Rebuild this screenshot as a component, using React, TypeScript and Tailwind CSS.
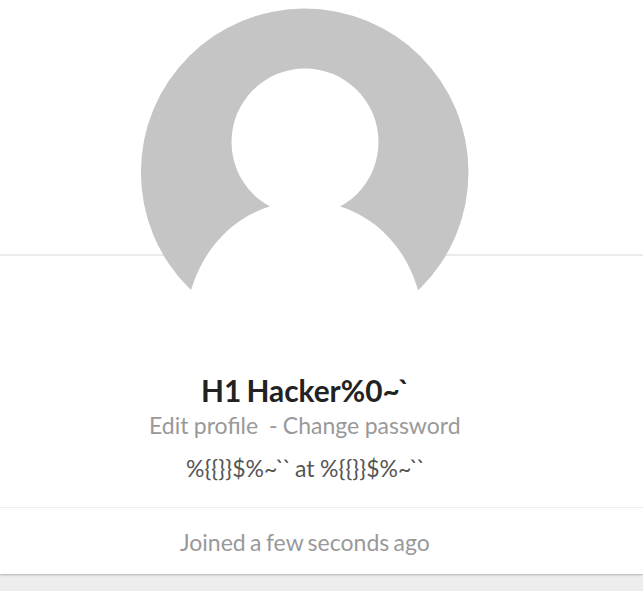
export default function App() {
  return (
    <div className="h-[591px] w-[643px] overflow-hidden bg-[#ededed] font-['Lato',sans-serif] text-[#999]">
      <div className="flex h-[574px] flex-col bg-white shadow-[0_1px_2px_rgba(0,0,0,0.25)]">
        <div className="h-[256px] shrink-0 border-b-2 border-[#ebebeb] pt-2 pl-[140px]">
          <svg className="block h-[329px] w-[329px] overflow-visible" viewBox="140 8 329 329">
            <defs>
              <clipPath id="avatar"><circle cx="304.7" cy="172.3" r="163.8" /></clipPath>
            </defs>
            <path d="M190 245H420V300H190Z" fill="#fff" />
            <g clipPath="url(#avatar)">
              <rect x="140" y="8" width="329" height="284" fill="#c5c5c5" />
            </g>
            <circle cx="305" cy="142" r="73.5" fill="#fff" />
            <path d="M191 294V290C204 248 232 218 271 206C263 202 257 197 252 192H358C353 197 347 202 339 206C377 218 406 248 418 290V294Z" fill="#fff" />
          </svg>
        </div>
        <div className="flex flex-1 flex-col pt-[118px]">
          <div className="pl-[201px] text-[29.8px] leading-[34px] font-bold [word-spacing:-2px] whitespace-pre text-[#222]">H1 Hacker%0<span className="tracking-[-1.8px]">~`</span></div>
          <div className="pl-[149px] text-[23px] leading-[34px] [word-spacing:-0.5px] whitespace-pre">Edit profile  - Change password</div>
          <div className="mt-[9px] pl-[186px] text-[23px] leading-[34px] [word-spacing:-0.3px] whitespace-pre text-[#555]">{"%{{}}$%"}<span className="tracking-[-2.1px]">~``</span>{" at %{{}}$%"}<span className="tracking-[-2.1px]">~``</span></div>
        </div>
        <div className="h-[67px] shrink-0 border-t border-[#eee] pt-[17px] pl-[180px] text-[23px] leading-[34px] [word-spacing:-1.5px] whitespace-pre">Joined a few seconds ago</div>
      </div>
    </div>
  );
}
